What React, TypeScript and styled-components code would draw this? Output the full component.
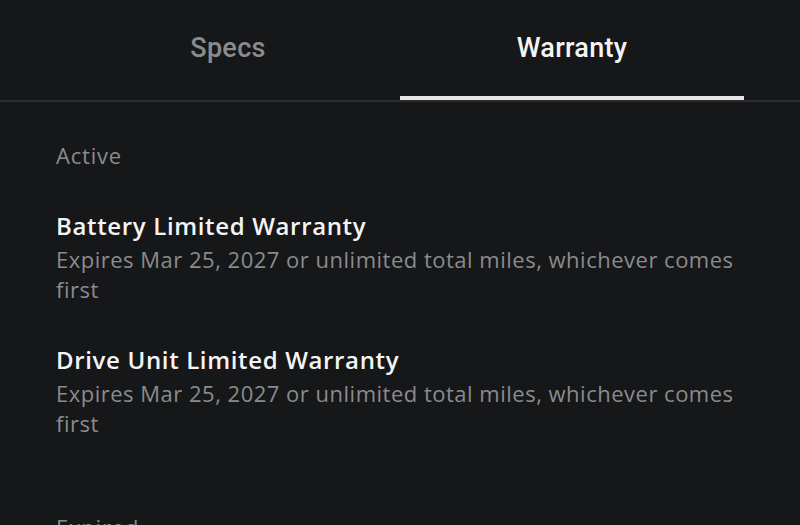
import React from "react";
import styled, { createGlobalStyle } from "styled-components";

const Global = createGlobalStyle`
  html, body { margin: 0; padding: 0; background: #161719; }
  body { font-family: "Open Sans", "Noto Sans", sans-serif; }
`;

const Page = styled.div`
  width: 800px;
  height: 525px;
  overflow: hidden;
  background: #161719;
  color: #f2f2f2;
`;

const TabBar = styled.div`
  display: flex;
  padding: 0 56px;
  border-bottom: 2px solid #2c2d30;
  height: 100px;
`;

const Tab = styled.div<{ $active?: boolean }>`
  flex: 1;
  display: flex;
  align-items: center;
  justify-content: center;
  font-family: "Roboto", sans-serif;
  font-size: 27px;
  font-weight: 500;
  letter-spacing: 0.3px;
  color: ${(p) => (p.$active ? "#f4f4f4" : "#8a8b8d")};
  padding-bottom: 4px;
  position: relative;
  &::after {
    content: "";
    display: ${(p) => (p.$active ? "block" : "none")};
    position: absolute;
    left: 0;
    right: 0;
    bottom: 0;
    height: 4px;
    background: #e6e6e6;
  }
`;

const Content = styled.div`
  padding: 38px 56px 0;
`;

const SectionLabel = styled.div`
  font-size: 22px;
  letter-spacing: 0.8px;
  color: #8a8b8d;
  line-height: 30px;
  margin-bottom: 38px;
`;

const Item = styled.div`
  margin-bottom: 38px;
`;

const Title = styled.div`
  font-size: 24px;
  font-weight: 600;
  letter-spacing: 0.65px;
  color: #f4f4f4;
  line-height: 36px;
`;

const Sub = styled.div`
  font-size: 22px;
  letter-spacing: 0.5px;
  color: #8a8b8d;
  line-height: 30px;
`;

const Spacer = styled.div`
  height: 36px;
`;

const items = [
  "Battery Limited Warranty",
  "Drive Unit Limited Warranty",
];

export default function App() {
  return (
    <Page>
      <Global />
      <TabBar>
        <Tab>Specs</Tab>
        <Tab $active>Warranty</Tab>
      </TabBar>
      <Content>
        <SectionLabel>Active</SectionLabel>
        {items.map((t) => (
          <Item key={t}>
            <Title>{t}</Title>
            <Sub>Expires Mar 25, 2027 or unlimited total miles, whichever comes first</Sub>
          </Item>
        ))}
        <Spacer />
        <SectionLabel>Expired</SectionLabel>
      </Content>
    </Page>
  );
}
